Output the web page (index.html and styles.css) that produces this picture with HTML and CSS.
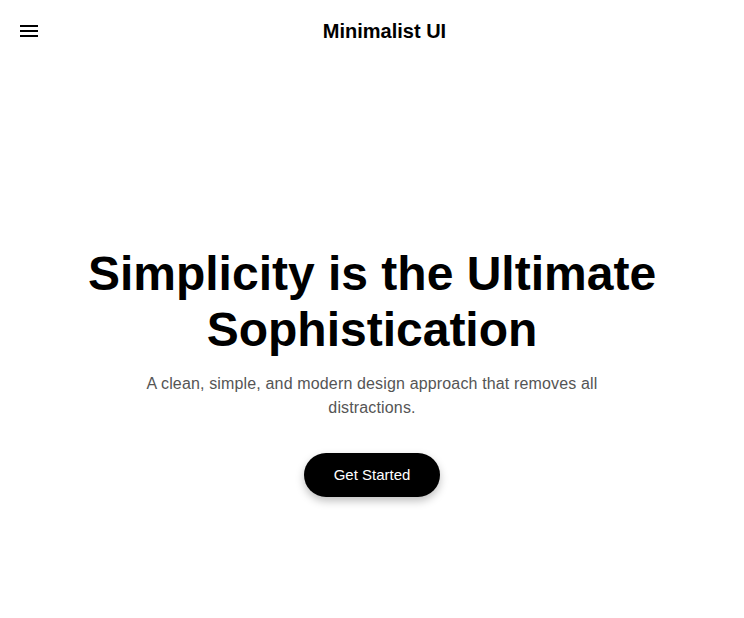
FILE: index.html
```html
<!DOCTYPE html>
<html lang="en">
<head>
<meta charset="utf-8">
<title>Minimalist UI</title>
<link rel="stylesheet" href="styles.css">
</head>
<body>
<header class="site-header">
  <button class="menu-btn" aria-label="Menu">
    <svg width="24" height="24" viewBox="0 0 24 24"><path d="M3 18h18v-2H3v2zm0-5h18v-2H3v2zm0-7v2h18V6H3z" fill="#000"/></svg>
  </button>
  <div class="brand">Minimalist UI</div>
</header>
<main class="hero">
  <h1 class="hero-title">Simplicity is the Ultimate Sophistication</h1>
  <p class="hero-text">A clean, simple, and modern design approach that removes all distractions.</p>
  <button class="cta">Get Started</button>
</main>
</body>
</html>
```
FILE: styles.css
```css
* { box-sizing: border-box; }
html, body { margin: 0; padding: 0; background: #fff; }
body { font-family: "Liberation Sans", Arial, Helvetica, sans-serif; color: #000; }

.site-header {
  height: 62px;
  display: flex;
  align-items: center;
  padding: 0 16px 0 17px;
}
.menu-btn {
  width: 24px;
  height: 24px;
  padding: 0;
  border: 0;
  background: none;
  display: flex;
  cursor: pointer;
}
.brand {
  flex: 1;
  text-align: center;
  font-size: 20px;
  font-weight: 700;
  line-height: 24px;
}

.hero {
  min-height: 100vh;
  display: flex;
  flex-direction: column;
  align-items: center;
  justify-content: center;
  text-align: center;
  padding: 0 24px;
}
.hero-title {
  margin: 0 0 14px;
  font-size: 48px;
  line-height: 56px;
  font-weight: 700;
  max-width: 640px;
}
.hero-text {
  margin: 0 0 33px;
  font-size: 16px;
  line-height: 24px;
  letter-spacing: 0.15px;
  color: #555;
  max-width: 500px;
}
.cta {
  font-family: inherit;
  font-size: 15px;
  line-height: 18px;
  padding: 13px 30px;
  border: 0;
  border-radius: 999px;
  background: #000;
  color: #fff;
  box-shadow: 0 4px 8px rgba(0,0,0,0.25);
  cursor: pointer;
}
```
